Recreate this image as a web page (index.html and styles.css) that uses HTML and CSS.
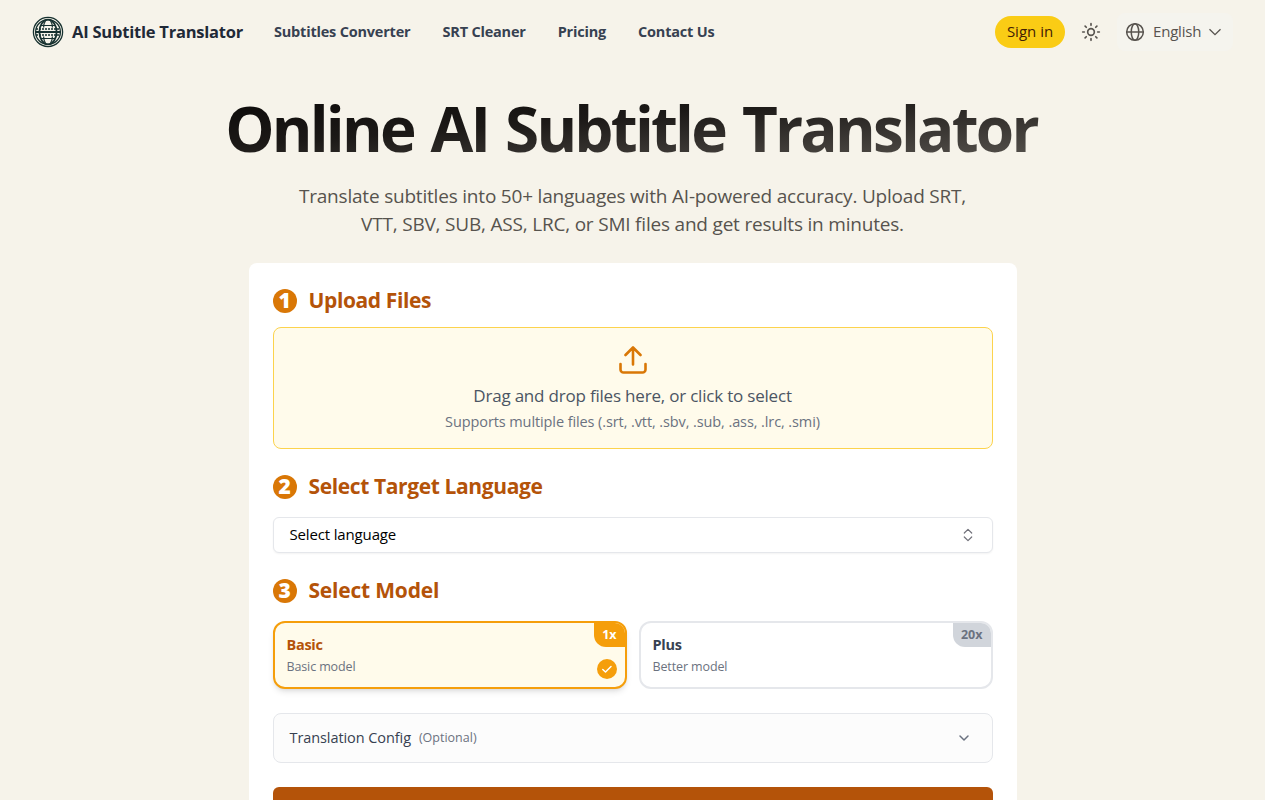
FILE: index.html
```html
<!DOCTYPE html>
<html lang="en">
<head>
  <meta charset="UTF-8" />
  <meta name="viewport" content="width=device-width, initial-scale=1" />
  <title>Online AI Subtitle Translator</title>
  <link rel="stylesheet" href="styles.css">
</head>
<body>
  <div class="page">
    <header class="header">
      <a class="brand" href="#">
        <svg class="brand-logo" viewBox="0 0 32 32" fill="none" stroke="#16302f">
          <circle cx="16" cy="16" r="14.6" stroke-width="1.3" />
          <circle cx="16" cy="16" r="12.4" stroke-width="1.3" />
          <ellipse cx="16" cy="16" rx="8.6" ry="12.4" stroke-width="1.8" />
          <path d="M13.6 4.5c-2 3-2 5-2 7M18.4 4.5c2 3 2 5 2 7M13.6 27.5c-2-3-2-5-2-7M18.4 27.5c2-3 2-5 2-7M9 9.5h14M9 22.5h14" stroke-width="1.2" />
          <path d="M3.5 16h25" stroke-width="2" />
          <path d="M4 13h24M4 19h24" stroke-width="1.4" stroke-dasharray="2 1" />
        </svg>
        <span class="brand-name">AI Subtitle Translator</span>
      </a>
      <nav class="nav">
        <a href="#">Subtitles Converter</a>
        <a href="#">SRT Cleaner</a>
        <a href="#">Pricing</a>
        <a href="#">Contact Us</a>
      </nav>
      <div class="actions">
        <button class="sign-in">Sign in</button>
        <svg class="sun" viewBox="0 0 24 24" fill="none" stroke="currentColor" stroke-width="2" stroke-linecap="round">
          <circle cx="12" cy="12" r="4" />
          <path d="M12 2v2M12 20v2M4.93 4.93l1.41 1.41M17.66 17.66l1.41 1.41M2 12h2M20 12h2M6.34 17.66l-1.41 1.41M19.07 4.93l-1.41 1.41" />
        </svg>
        <button class="lang">
          <svg class="globe" viewBox="0 0 24 24" fill="none" stroke="currentColor" stroke-width="1.8">
            <circle cx="12" cy="12" r="10" />
            <ellipse cx="12" cy="12" rx="4.5" ry="10" />
            <path d="M2 12h20" />
          </svg>
          <span class="lang-name">English</span>
          <svg class="lang-arrow" viewBox="0 0 14 14" fill="none" stroke="currentColor" stroke-width="1.3"><path d="M1.5 4.2l5.5 5.5 5.5-5.5" /></svg>
        </button>
      </div>
    </header>

    <main class="main">
      <h1 class="title"><span>Online AI Subtitle Translator</span></h1>
      <p class="lead">
        Translate subtitles into 50+ languages with AI-powered accuracy. Upload SRT,<br>
        VTT, SBV, SUB, ASS, LRC, or SMI files and get results in minutes.
      </p>

      <div class="card">
        <section>
          <h2 class="step"><b class="num">1</b><span class="step-name">Upload Files</span></h2>
          <div class="dropzone">
            <svg class="upload" viewBox="0 0 28 28" fill="none" stroke="currentColor" stroke-width="2.6" stroke-linecap="round" stroke-linejoin="round">
              <path d="M14 18.5V2M6.5 9L14 1.5 21.5 9M1.5 18v5.5a3 3 0 0 0 3 3h19a3 3 0 0 0 3-3V18" />
            </svg>
            <p class="drop-text">Drag and drop files here, or click to select</p>
            <p class="drop-hint">Supports multiple files (.srt, .vtt, .sbv, .sub, .ass, .lrc, .smi)</p>
          </div>
        </section>

        <section>
          <h2 class="step"><b class="num">2</b><span class="step-name">Select Target Language</span></h2>
          <button class="select">
            <span class="select-value">Select language</span>
            <svg class="updown" viewBox="0 0 16 16" fill="none" stroke="currentColor" stroke-width="1.2" stroke-linecap="round" stroke-linejoin="round"><path d="M4.3 6L8 2.3 11.7 6M4.3 10L8 13.7 11.7 10" /></svg>
          </button>
        </section>

        <section>
          <h2 class="step step-model"><b class="num">3</b><span class="step-name">Select Model</span></h2>
          <div class="models">
            <div class="model active">
              <h3>Basic</h3>
              <p>Basic model</p>
              <em class="rate">1x</em>
              <i class="check"><svg viewBox="0 0 12 12" fill="none" stroke="#fff" stroke-width="1.5" stroke-linecap="round" stroke-linejoin="round"><path d="M1.8 6.5l2.7 2.5 5.5-5.5" /></svg></i>
            </div>
            <div class="model">
              <h3>Plus</h3>
              <p>Better model</p>
              <em class="rate">20x</em>
            </div>
          </div>
        </section>

        <div class="config">
          <span class="config-name">Translation Config</span>
          <span class="config-note">(Optional)</span>
          <svg class="config-arrow" viewBox="0 0 16 16" fill="none" stroke="currentColor" stroke-width="1.5" stroke-linecap="round" stroke-linejoin="round"><path d="M4 6l4 4 4-4" /></svg>
        </div>

        <button class="submit"></button>
      </div>
    </main>
  </div>
</body>
</html>
```
FILE: styles.css
```css
* {
  box-sizing: border-box;
  margin: 0;
  padding: 0;
}

html {
  background: #fff;
}

body {
  font-family: "Open Sans", sans-serif;
  height: 800px;
  overflow: hidden;
}

a {
  color: inherit;
  text-decoration: none;
}

button {
  font: inherit;
  border: none;
}

svg {
  display: block;
  flex: none;
}

.page {
  width: 1265px;
  height: 800px;
  overflow: hidden;
  background: #f6f3ea;
}

.header {
  display: flex;
  align-items: center;
  height: 64px;
  padding: 0 32px;
}

.brand {
  display: flex;
  align-items: center;
  gap: 8px;
  width: 242px;
  white-space: nowrap;
}

.brand-logo {
  width: 32px;
  height: 32px;
}

.brand-name {
  padding-bottom: 2px;
  font-size: 16.5px;
  font-weight: 700;
  letter-spacing: -0.22px;
  color: #1f2937;
}

.nav {
  display: flex;
  gap: 32px;
  padding-bottom: 2px;
  font-size: 14.5px;
  font-weight: 700;
  letter-spacing: -0.2px;
  color: #374151;
  white-space: nowrap;
}

.actions {
  display: flex;
  align-items: center;
  margin-left: auto;
  color: #57534e;
}

.sign-in {
  width: 70px;
  height: 32px;
  padding-bottom: 2px;
  border-radius: 16px;
  background: #facc15;
  color: #422006;
  font-size: 15px;
}

.sun {
  width: 20px;
  height: 20px;
  margin: 0 16px;
}

.lang {
  display: flex;
  align-items: center;
  width: 116px;
  height: 38px;
  padding: 0 11px 0 8px;
  border-radius: 8px;
  background: #f5f4ee;
  color: #57534e;
  font-size: 15px;
}

.lang-name {
  padding-bottom: 2px;
  letter-spacing: -0.2px;
}

.globe {
  width: 20px;
  height: 20px;
  margin-right: 8px;
}

.lang-arrow {
  width: 14px;
  height: 14px;
  margin-left: auto;
}

.title {
  margin-top: 32px;
  height: 64px;
  line-height: 64px;
  font-size: 62px;
  font-weight: 700;
  letter-spacing: -2.8px;
  word-spacing: 3.5px;
  text-align: center;
  white-space: nowrap;
}

.title span {
  display: inline-block;
  padding-right: 3px;
  background: linear-gradient(to bottom right, #0c0a09, #1c1917 40%, #57534e);
  -webkit-background-clip: text;
  background-clip: text;
  color: transparent;
}

.lead {
  margin-top: 22px;
  font-size: 19px;
  line-height: 28px;
  letter-spacing: -0.2px;
  color: #57534e;
  text-align: center;
}

.card {
  width: 768px;
  height: 600px;
  margin: 25px auto 0;
  padding: 24px;
  border-radius: 8px;
  background: #fff;
}

.step {
  display: flex;
  align-items: center;
  gap: 12px;
  height: 28px;
  font-size: 21px;
  font-weight: 700;
  letter-spacing: -0.38px;
  color: #b45309;
}

.step-name {
  padding-bottom: 2px;
}

.step-model {
  letter-spacing: -0.2px;
}

.num {
  width: 24px;
  height: 24px;
  border-radius: 50%;
  background: #d97706;
  color: #fff;
  font-size: 21px;
  line-height: 23px;
  text-align: center;
}

.dropzone {
  display: flex;
  flex-direction: column;
  align-items: center;
  height: 122px;
  margin: 12px 0 24px;
  padding-top: 18px;
  border: 1px solid #fcd34d;
  border-radius: 8px;
  background: #fffbeb;
}

.upload {
  width: 28px;
  height: 28px;
  color: #d97706;
}

.drop-text {
  margin-top: 8px;
  font-size: 17px;
  line-height: 28px;
  letter-spacing: -0.2px;
  color: #4b5563;
}

.drop-hint {
  font-size: 14.5px;
  line-height: 24px;
  letter-spacing: -0.1px;
  color: #6b7280;
}

.select {
  display: flex;
  align-items: center;
  justify-content: space-between;
  width: 720px;
  height: 36px;
  margin: 16px 0 24px;
  padding: 0 16px;
  border: 1px solid #e5e7eb;
  border-radius: 6px;
  background: #fff;
  box-shadow: 0 1px 2px rgba(0, 0, 0, 0.05);
  font-size: 15px;
}

.select-value {
  padding-bottom: 2px;
  letter-spacing: -0.15px;
}

.updown {
  width: 16px;
  height: 16px;
  color: #71717a;
}

.models {
  display: grid;
  grid-template-columns: 1fr 1fr;
  gap: 12px;
  margin: 16px 0 24px;
}

.model {
  position: relative;
  height: 68px;
  padding: 11px 12px;
  border: 2px solid #e5e7eb;
  border-radius: 12px;
  overflow: hidden;
}

.model.active {
  border-color: #f59e0b;
  background: #fffbeb;
  box-shadow: 0 4px 6px -1px rgba(0, 0, 0, 0.1), 0 2px 4px -2px rgba(0, 0, 0, 0.1);
}

.model h3 {
  font-size: 14.5px;
  font-weight: 700;
  line-height: 22px;
  letter-spacing: -0.3px;
  color: #374151;
}

.model.active h3 {
  color: #b45309;
}

.model p {
  font-size: 12.5px;
  line-height: 22px;
  letter-spacing: -0.12px;
  color: #6b7280;
}

.rate {
  position: absolute;
  top: 0;
  right: 0;
  padding: 0 8px 1px;
  border-bottom-left-radius: 12px;
  background: #d1d5db;
  color: #6b7280;
  font-size: 12.5px;
  font-style: normal;
  font-weight: 700;
  line-height: 23px;
}

.active .rate {
  background: #f59e0b;
  color: #fff;
}

.check {
  position: absolute;
  right: 8px;
  bottom: 8px;
  display: grid;
  place-items: center;
  width: 20px;
  height: 20px;
  border-radius: 50%;
  background: #f59e0b;
}

.check svg {
  width: 12px;
  height: 12px;
}

.config {
  display: flex;
  align-items: center;
  height: 50px;
  padding: 0 20px 0 16px;
  border: 1px solid #e5e7eb;
  border-radius: 8px;
  background: #fcfcfc;
}

.config-name {
  padding-bottom: 2px;
  font-size: 14.5px;
  letter-spacing: -0.08px;
  color: #374151;
}

.config-note {
  margin-left: 8px;
  padding-bottom: 2px;
  font-size: 12.5px;
  color: #6b7280;
}

.config-arrow {
  width: 16px;
  height: 16px;
  margin-left: auto;
  color: #6b7280;
}

.submit {
  display: block;
  width: 720px;
  height: 48px;
  margin-top: 24px;
  border-radius: 6px;
  background: #b45309;
}
```
